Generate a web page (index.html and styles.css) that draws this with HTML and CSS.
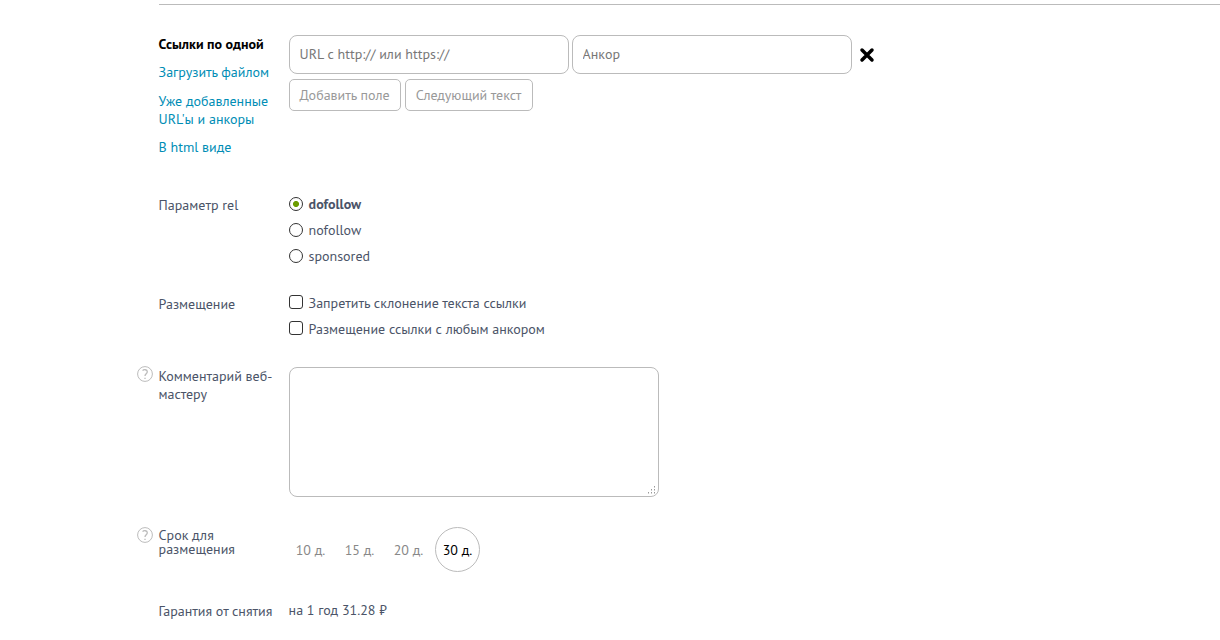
FILE: index.html
```html
<!DOCTYPE html>
<html lang="ru">

<head>
  <meta charset="UTF-8">
  <meta name="viewport" content="width=device-width, initial-scale=1.0">
  <title>Размещение ссылок</title>
  <link rel="stylesheet" href="styles.css">
</head>

<body>
  <form class="form">
    <!-- Ссылки -->
    <div class="row row-links">
      <ul class="label tabs">
        <li class="active"><span>Ссылки по одной</span></li>
        <li><a href="#">Загрузить файлом</a></li>
        <li><a href="#">Уже добавленные<br>URL'ы и анкоры</a></li>
        <li><a href="#">В html виде</a></li>
      </ul>
      <div class="field">
        <div class="inputs">
          <input type="text" class="text-input" placeholder="URL с http:// или https://">
          <input type="text" class="text-input" placeholder="Анкор">
          <svg class="remove" width="16" height="16" viewBox="0 0 16 16">
            <path d="M3 3L13 13M13 3L3 13" stroke="#000" stroke-width="3.5" stroke-linecap="round"/>
          </svg>
        </div>
        <div class="buttons">
          <button type="button" class="button add">Добавить поле</button>
          <button type="button" class="button next">Следующий текст</button>
        </div>
      </div>
    </div>

    <!-- Параметр rel -->
    <div class="row row-rel">
      <div class="label"><span>Параметр rel</span></div>
      <div class="field options">
        <label class="checked"><input type="radio" name="rel" checked><span>dofollow</span></label>
        <label><input type="radio" name="rel"><span>nofollow</span></label>
        <label><input type="radio" name="rel"><span>sponsored</span></label>
      </div>
    </div>

    <!-- Размещение -->
    <div class="row row-place">
      <div class="label"><span>Размещение</span></div>
      <div class="field options">
        <label><input type="checkbox"><span>Запретить склонение текста ссылки</span></label>
        <label><input type="checkbox"><span>Размещение ссылки с любым анкором</span></label>
      </div>
    </div>

    <!-- Комментарий -->
    <div class="row row-comment">
      <div class="label">
        <svg class="help" width="16" height="16" viewBox="0 0 16 16" fill="none" stroke="#bcbcbc">
          <circle cx="8" cy="8" r="7.4"/>
          <path d="M5.6 4.6C6.6 3.3 10.3 3.2 10.3 5.8C10.3 7.8 8 7.8 8 10M8 11.7V13.1" stroke-width="1.3"/>
        </svg>
        <span>Комментарий веб-<br>мастеру</span>
      </div>
      <div class="field comment">
        <textarea></textarea>
        <svg class="grip" width="9" height="9" viewBox="0 0 9 9" fill="#999">
          <path d="M7 0h1v1.4h-1zM4 3h1v1.4h-1zM7 3h1v1.4h-1zM1 6h1v1.4h-1zM4 6h1v1.4h-1zM7 6h1v1.4h-1z"/>
        </svg>
      </div>
    </div>

    <!-- Срок -->
    <div class="row row-term">
      <div class="label">
        <svg class="help" width="16" height="16" viewBox="0 0 16 16" fill="none" stroke="#bcbcbc">
          <circle cx="8" cy="8" r="7.4"/>
          <path d="M5.6 4.6C6.6 3.3 10.3 3.2 10.3 5.8C10.3 7.8 8 7.8 8 10M8 11.7V13.1" stroke-width="1.3"/>
        </svg>
        <span>Срок для<br>размещения</span>
      </div>
      <div class="field days">
        <span>10 д.</span>
        <span>15 д.</span>
        <span>20 д.</span>
        <span class="selected">30 д.</span>
      </div>
    </div>

    <!-- Гарантия -->
    <div class="row row-warranty">
      <div class="label"><span>Гарантия от снятия</span></div>
      <div class="field price">на 1 год 31.28 ₽</div>
    </div>
  </form>
</body>

</html>
```
FILE: styles.css
```css
* {
  box-sizing: border-box;
}

body {
  margin: 0;
  background-color: #fff;
  color: #4b5468;
  font-family: "PT Sans", "Noto Sans", "Open Sans", sans-serif;
  font-size: 14px;
  line-height: 18px;
  overflow: hidden;
}

.form {
  margin: 4px 0 0 158.6px;
  border-top: 1px solid #bbb;
  white-space: nowrap;
}

.row {
  display: flex;
  align-items: flex-start;
}

.label {
  position: relative;
  width: 130px;
  flex-shrink: 0;
}

.row-links {
  height: 160px;
  padding-top: 30px;
}

.tabs {
  list-style: none;
  margin: 0;
  padding: 0;
}

.tabs li {
  margin-bottom: 10.3px;
}

.tabs .active {
  color: #000;
  font-weight: bold;
}

.tabs a {
  color: #008db5;
  text-decoration: none;
}

.inputs {
  display: flex;
  align-items: center;
  gap: 3px;
}

.text-input {
  width: 280px;
  height: 39px;
  padding: 0 10px 2px;
  border: 1px solid #bbb;
  border-radius: 8px;
  font: inherit;
}

.text-input::placeholder {
  color: #777;
}

.remove {
  margin: 1px 0 0 4px;
}

.buttons {
  display: flex;
  gap: 4px;
  margin-top: 5px;
}

.button {
  height: 32px;
  padding: 0;
  border: 1px solid #bbb;
  border-radius: 5px;
  background-color: #fff;
  color: #999;
  font: inherit;
}

.add {
  width: 112px;
}

.next {
  width: 128px;
}

.row-rel {
  height: 98px;
  padding-top: 30px;
}

.row-rel .label,
.row-place .label {
  padding-top: 1px;
}

.options label {
  display: flex;
  align-items: center;
  height: 18px;
  margin-bottom: 8px;
}

.options .checked {
  font-weight: bold;
}

.options input {
  appearance: none;
  width: 14px;
  height: 14px;
  margin: 0 6px 0 0;
  border: 1px solid #333;
  border-radius: 3px;
  background-color: #fff;
}

.options input[type="radio"] {
  border-radius: 50%;
}

.options input[type="radio"]:checked {
  background: radial-gradient(circle, #6b9c00 2.7px, #fff 3.3px);
}

.row-place {
  height: 104px;
  padding-top: 31px;
}

.row-place input {
  position: relative;
  top: -1px;
}

.row-comment {
  height: 130px;
}

.help {
  position: absolute;
  left: -21.6px;
  top: -1px;
}

.comment {
  position: relative;
}

.comment textarea {
  display: block;
  width: 370px;
  height: 130px;
  border: 1px solid #bbb;
  border-radius: 8px;
  resize: none;
}

.grip {
  position: absolute;
  right: 3px;
  bottom: 2px;
}

.row-term {
  height: 75px;
  padding-top: 30px;
}

.row-term .label {
  padding-top: 1px;
  line-height: 14px;
}

.row-term .help {
  top: 0;
}

.days {
  display: flex;
  gap: 4px;
  margin-left: -0.6px;
  color: #888;
}

.days span {
  width: 45px;
  height: 45px;
  border: 1px solid transparent;
  border-radius: 50%;
  line-height: 44px;
  text-align: center;
}

.days .selected {
  border-color: #bbb;
  color: #000;
}

.row-warranty {
  padding-top: 29px;
}

.row-warranty .label {
  padding-top: 1px;
}
```
